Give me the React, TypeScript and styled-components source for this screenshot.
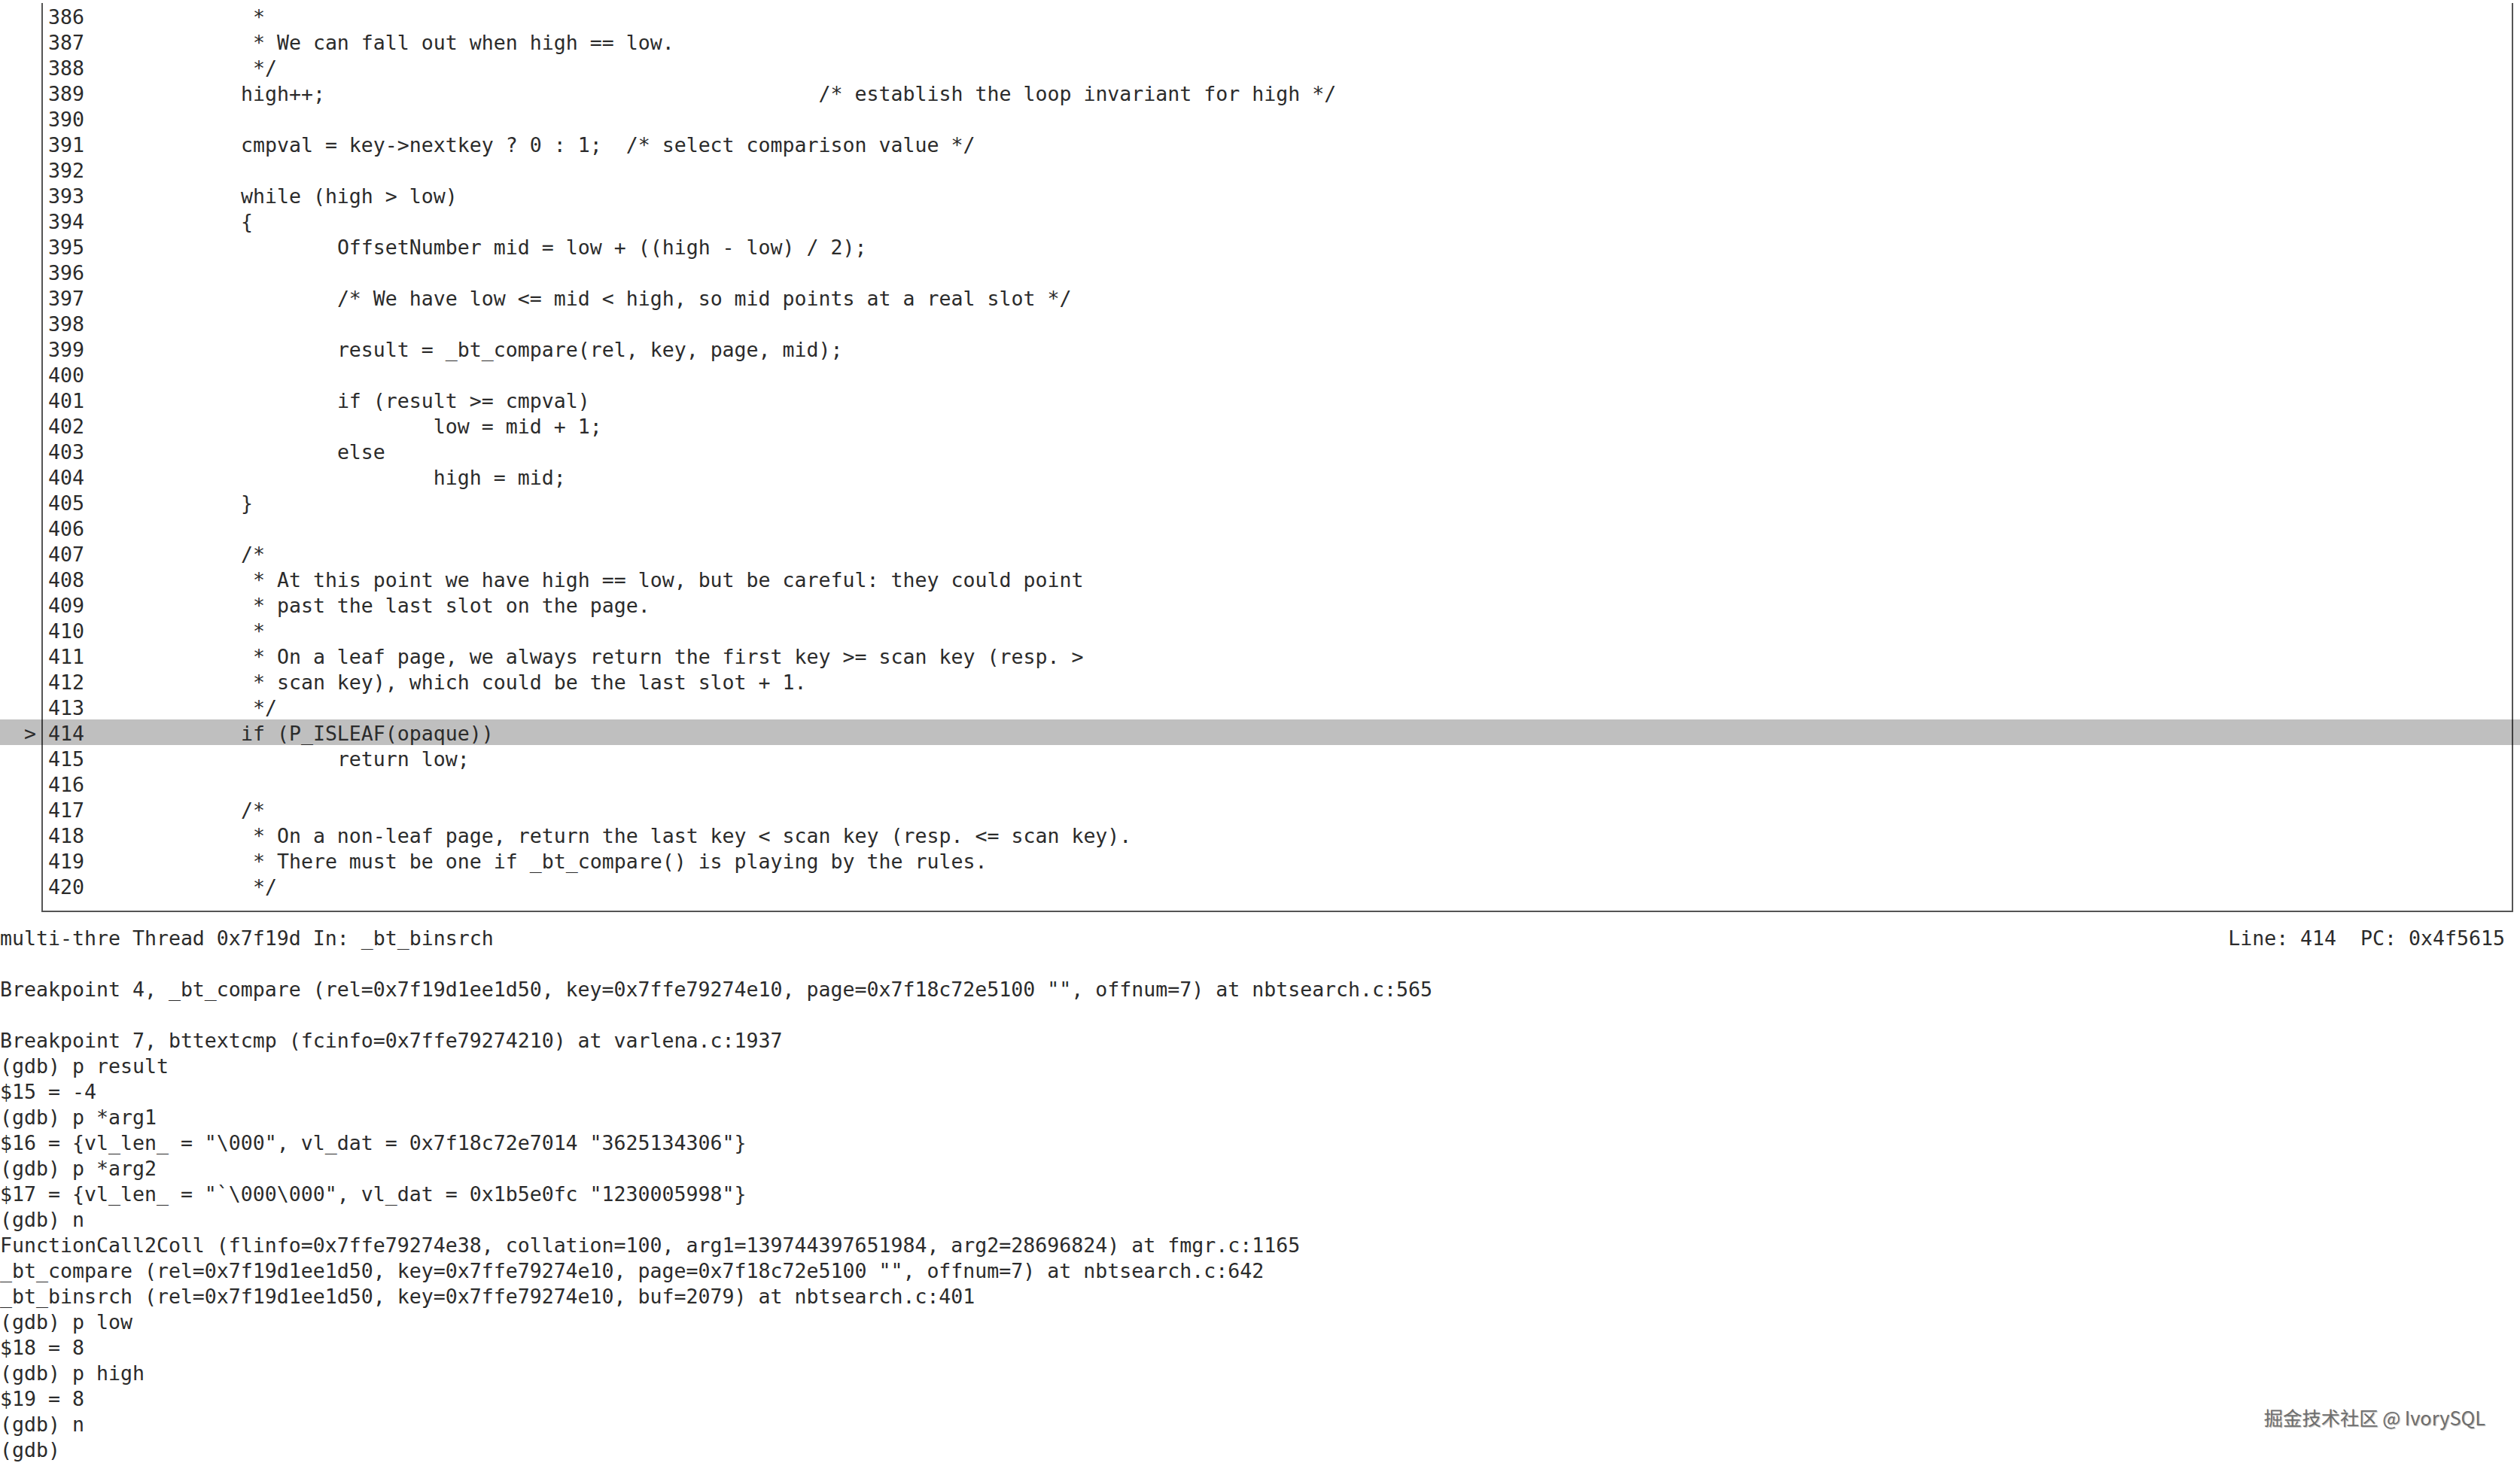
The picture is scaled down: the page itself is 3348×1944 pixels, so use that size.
import React from "react";
import styled, { createGlobalStyle } from "styled-components";

const GlobalStyle = createGlobalStyle`
  html, body {
    margin: 0;
    padding: 0;
    background: #ffffff;
  }
  body {
    width: 3348px;
    height: 1944px;
    overflow: hidden;
  }
`;

const Terminal = styled.div`
  position: relative;
  width: 3348px;
  height: 1944px;
  box-sizing: border-box;
  padding-top: 4px;
  background: #ffffff;
  color: #2b2b2b;
  font-family: "DejaVu Sans Mono", "Liberation Mono", monospace;
  font-size: 26.576px;
  line-height: 38px;
  display: flex;
  flex-direction: column;
`;

const SourceFrame = styled.div`
  margin-left: 55px;
  width: 3284px;
  box-sizing: border-box;
  border-left: 2px solid #555555;
  border-right: 2px solid #555555;
  border-bottom: 2px solid #555555;
  padding-bottom: 16px;
  display: flex;
  flex-direction: column;
`;

const SourceRow = styled.div<{ $current?: boolean }>`
  margin-left: -57px;
  margin-right: -11px;
  height: 34px;
  display: grid;
  grid-template-columns: 48px 16px 128px 1fr;
  background: ${(p) => (p.$current ? "rgba(0, 0, 0, 0.25)" : "transparent")};
  white-space: pre;
  tab-size: 8;
`;

const Marker = styled.span`
  text-align: right;
`;

const LineNo = styled.span`
  grid-column: 3;
`;

const Code = styled.span`
  grid-column: 4;
  white-space: pre;
  tab-size: 8;
`;

const StatusBar = styled.div`
  margin-top: 16px;
  height: 34px;
  display: flex;
  justify-content: space-between;
  padding-right: 20px;
  white-space: pre;
`;

const Console = styled.div`
  display: flex;
  flex-direction: column;
`;

const ConsoleLine = styled.div`
  height: 34px;
  white-space: pre;
`;

const Watermark = styled.div`
  position: absolute;
  right: 46px;
  top: 1864px;
  font-family: "Noto Sans CJK SC", "Noto Sans", sans-serif;
  font-size: 25.3px;
  line-height: 38px;
  color: #6e6e6e;
  text-shadow: 1px 1px 1px rgba(0, 0, 0, 0.28), -1px -1px 0 rgba(255, 255, 255, 0.9);
  white-space: pre;
`;

type Src = { n: number; code: string };

const source: Src[] = [
  { n: 386, code: "\t *" },
  { n: 387, code: "\t * We can fall out when high == low." },
  { n: 388, code: "\t */" },
  { n: 389, code: "\thigh++;\t\t\t\t\t\t/* establish the loop invariant for high */" },
  { n: 390, code: "" },
  { n: 391, code: "\tcmpval = key->nextkey ? 0 : 1;  /* select comparison value */" },
  { n: 392, code: "" },
  { n: 393, code: "\twhile (high > low)" },
  { n: 394, code: "\t{" },
  { n: 395, code: "\t\tOffsetNumber mid = low + ((high - low) / 2);" },
  { n: 396, code: "" },
  { n: 397, code: "\t\t/* We have low <= mid < high, so mid points at a real slot */" },
  { n: 398, code: "" },
  { n: 399, code: "\t\tresult = _bt_compare(rel, key, page, mid);" },
  { n: 400, code: "" },
  { n: 401, code: "\t\tif (result >= cmpval)" },
  { n: 402, code: "\t\t\tlow = mid + 1;" },
  { n: 403, code: "\t\telse" },
  { n: 404, code: "\t\t\thigh = mid;" },
  { n: 405, code: "\t}" },
  { n: 406, code: "" },
  { n: 407, code: "\t/*" },
  { n: 408, code: "\t * At this point we have high == low, but be careful: they could point" },
  { n: 409, code: "\t * past the last slot on the page." },
  { n: 410, code: "\t *" },
  { n: 411, code: "\t * On a leaf page, we always return the first key >= scan key (resp. >" },
  { n: 412, code: "\t * scan key), which could be the last slot + 1." },
  { n: 413, code: "\t */" },
  { n: 414, code: "\tif (P_ISLEAF(opaque))" },
  { n: 415, code: "\t\treturn low;" },
  { n: 416, code: "" },
  { n: 417, code: "\t/*" },
  { n: 418, code: "\t * On a non-leaf page, return the last key < scan key (resp. <= scan key)." },
  { n: 419, code: "\t * There must be one if _bt_compare() is playing by the rules." },
  { n: 420, code: "\t */" },
];

const CURRENT = 414;

const consoleLines: string[] = [
  "",
  'Breakpoint 4, _bt_compare (rel=0x7f19d1ee1d50, key=0x7ffe79274e10, page=0x7f18c72e5100 "", offnum=7) at nbtsearch.c:565',
  "",
  "Breakpoint 7, bttextcmp (fcinfo=0x7ffe79274210) at varlena.c:1937",
  "(gdb) p result",
  "$15 = -4",
  "(gdb) p *arg1",
  '$16 = {vl_len_ = "\\000", vl_dat = 0x7f18c72e7014 "3625134306"}',
  "(gdb) p *arg2",
  '$17 = {vl_len_ = "`\\000\\000", vl_dat = 0x1b5e0fc "1230005998"}',
  "(gdb) n",
  "FunctionCall2Coll (flinfo=0x7ffe79274e38, collation=100, arg1=139744397651984, arg2=28696824) at fmgr.c:1165",
  '_bt_compare (rel=0x7f19d1ee1d50, key=0x7ffe79274e10, page=0x7f18c72e5100 "", offnum=7) at nbtsearch.c:642',
  "_bt_binsrch (rel=0x7f19d1ee1d50, key=0x7ffe79274e10, buf=2079) at nbtsearch.c:401",
  "(gdb) p low",
  "$18 = 8",
  "(gdb) p high",
  "$19 = 8",
  "(gdb) n",
  "(gdb) ",
];

export default function App() {
  return (
    <>
      <GlobalStyle />
      <Terminal>
        <SourceFrame>
          {source.map((l) => (
            <SourceRow key={l.n} $current={l.n === CURRENT}>
              <Marker>{l.n === CURRENT ? ">" : ""}</Marker>
              <LineNo>{String(l.n)}</LineNo>
              <Code>{l.code}</Code>
            </SourceRow>
          ))}
        </SourceFrame>
        <StatusBar>
          <span>multi-thre Thread 0x7f19d In: _bt_binsrch</span>
          <span>Line: 414  PC: 0x4f5615</span>
        </StatusBar>
        <Console>
          {consoleLines.map((t, i) => (
            <ConsoleLine key={i}>{t}</ConsoleLine>
          ))}
        </Console>
        <Watermark>掘金技术社区 @ IvorySQL</Watermark>
      </Terminal>
    </>
  );
}
